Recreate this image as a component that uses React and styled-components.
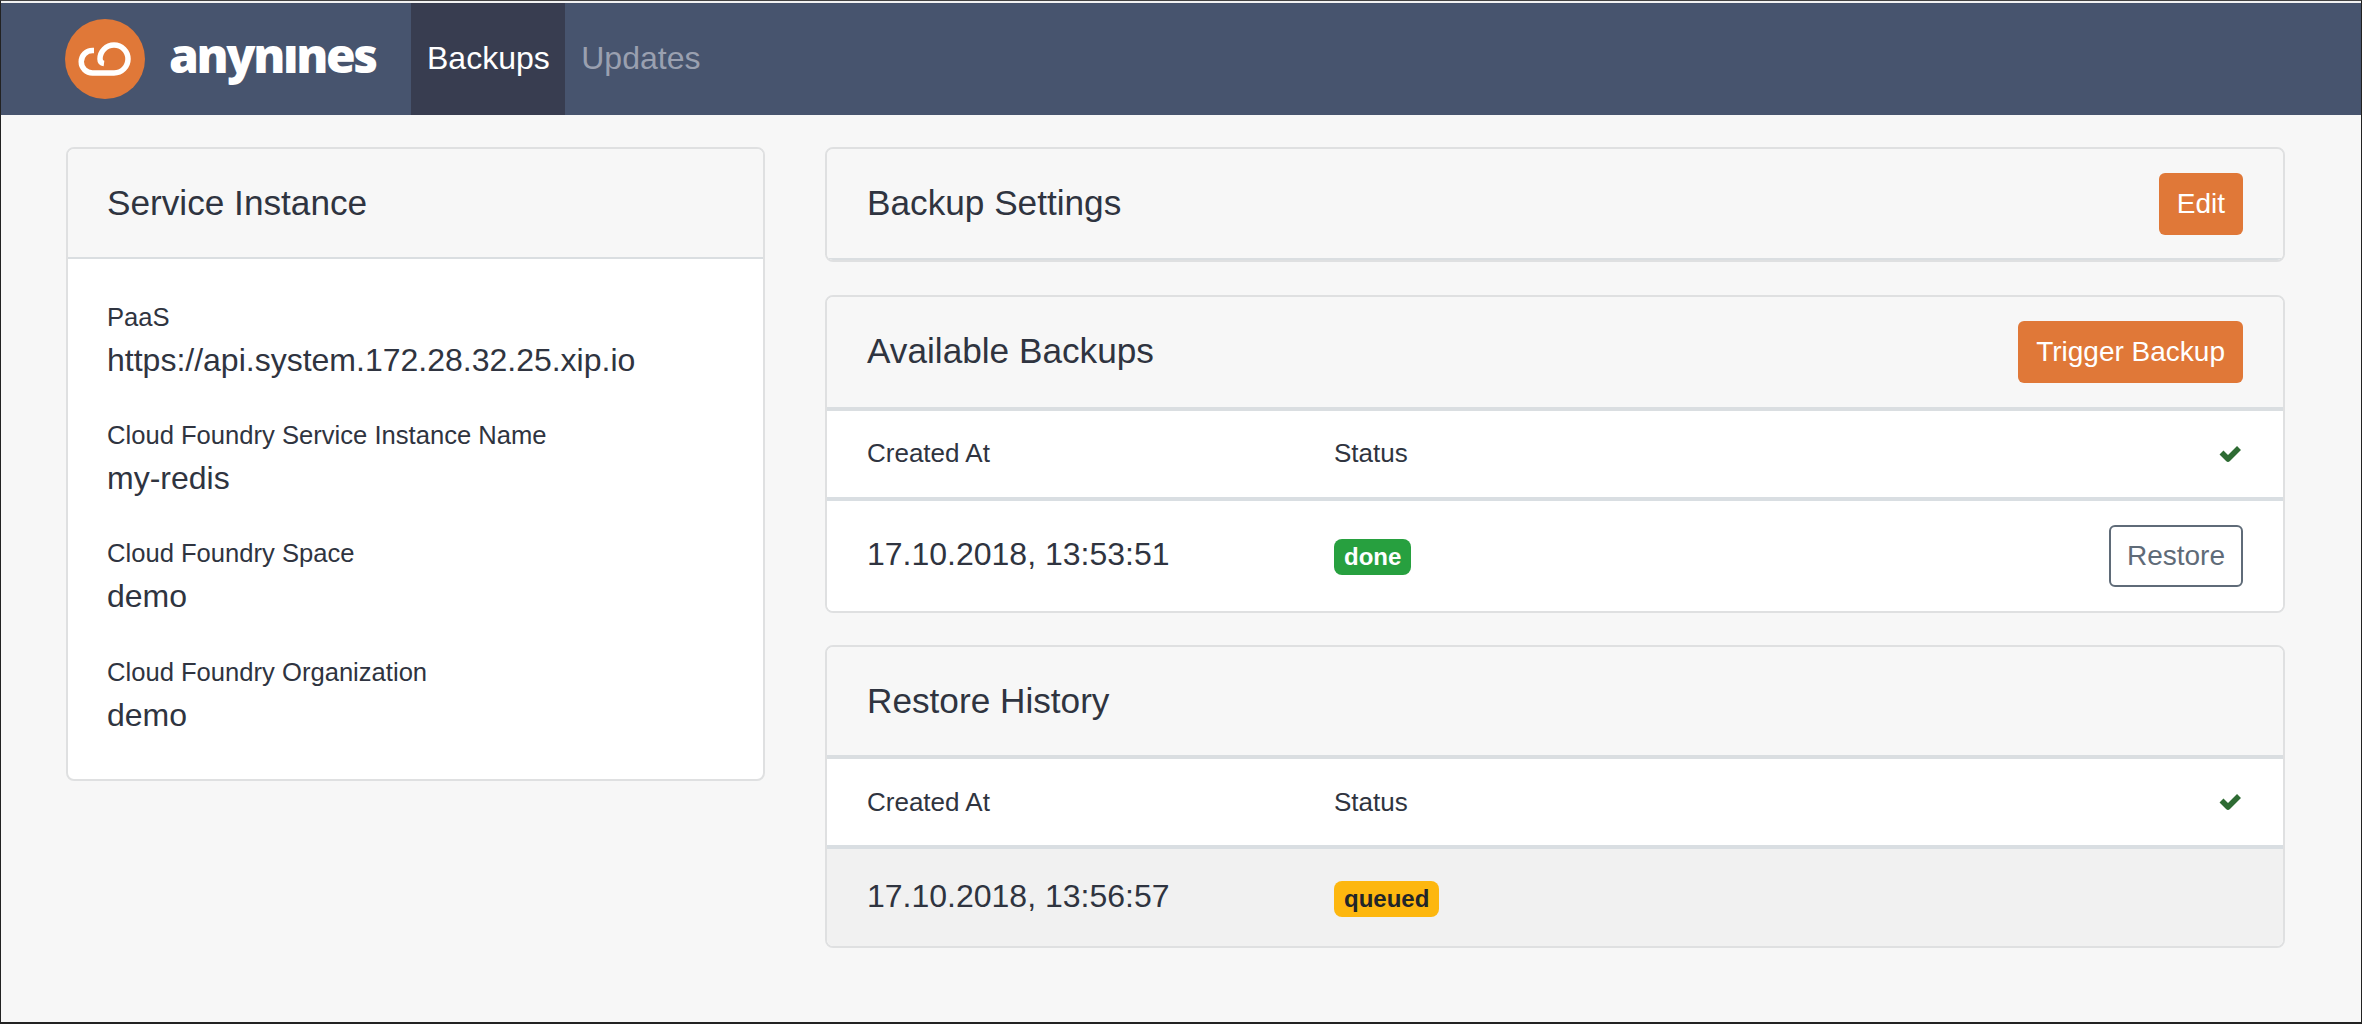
import React from 'react';
import styled, { createGlobalStyle } from 'styled-components';

const Global = createGlobalStyle`
  html, body { margin: 0; padding: 0; height: 1024px; overflow: hidden; background: #f7f7f7; }
  * { box-sizing: border-box; }
`;

const Page = styled.div`
  height: 1024px;
  background: #f7f7f7;
  border-top: 1px solid #444;
  border-left: 1px solid #222;
  border-right: 1px solid #222;
  border-bottom: 2px solid #222;
  font-family: "Liberation Sans", Arial, sans-serif;
  color: #2f3440;
`;
const TopBar = styled.header`
  height: 114px;
  border-top: 2px solid #f2f2f2;
  background: #47546e;
  display: flex;
  align-items: stretch;
  padding-left: 64px;
`;
const Brand = styled.div`
  display: flex;
  align-items: center;
  gap: 24px;
  width: 346px;
  margin-top: -1px;
`;
const LogoText = styled.span`
  font-family: "Open Sans", sans-serif;
  font-weight: 800;
  font-size: 48px;
  letter-spacing: -2.4px;
  color: #fff;
  line-height: 1;
  margin-top: -8px;
`;
const Dotless = styled.span`
  display: inline-block;
  clip-path: inset(30% 0 0 0);
`;
const Tab = styled.a`
  display: flex;
  align-items: center;
  padding: 0 15.5px 2px 16px;
  font-size: 32px;
  color: ${p => (p.$active ? '#fff' : '#9aa0b0')};
  background: ${p => (p.$active ? '#383d50' : 'transparent')};
`;
const Main = styled.main`
  display: grid;
  grid-template-columns: 699px 1460px;
  column-gap: 60px;
  padding: 32px 0 0 65px;
  align-items: start;
`;
const Column = styled.div`
  display: flex;
  flex-direction: column;
  gap: 32.5px;
`;
const Card = styled.section`
  border: 2px solid #dfe0e1;
  border-radius: 8px;
  background: #fff;
  overflow: hidden;
`;
const CardHeader = styled.div`
  height: ${p => p.$h}px;
  background: #f7f7f7;
  display: flex;
  align-items: center;
  justify-content: space-between;
  padding: 0 40px 0 ${p => p.$left || 40}px;
  border-bottom: ${p => (p.$thick ? 4 : 2)}px solid #dadee1;
`;
const CardTitle = styled.h2`
  margin: 0;
  font-size: 35.2px;
  font-weight: 400;
  line-height: 1.2;
  color: #2f3440;
`;
const FieldList = styled.div`
  padding: 39px 40px 8px 39px;
  display: flex;
  flex-direction: column;
`;
const Field = styled.div`
  height: 118.2px;
`;
const FieldLabel = styled.div`
  font-size: 25.6px;
  line-height: 38px;
`;
const FieldValue = styled.div`
  font-size: 32px;
  line-height: 48px;
`;
const PrimaryButton = styled.button`
  height: 62px;
  padding: 0 18px;
  border: 0;
  border-radius: 6px;
  background: #e07838;
  color: #fff;
  font: 400 28px "Liberation Sans", Arial, sans-serif;
`;
const OutlineButton = styled.button`
  height: 62px;
  width: 134px;
  border: 2px solid #5f6b78;
  border-radius: 6px;
  background: #fff;
  color: #5f6b78;
  font: 400 28px "Liberation Sans", Arial, sans-serif;
`;
const Row = styled.div`
  display: grid;
  grid-template-columns: 467px 1fr auto;
  align-items: center;
  padding: 0 40px;
  height: ${p => p.$h}px;
  background: ${p => p.$bg || '#fff'};
  border-bottom: ${p => (p.$line ? '4px solid #d9dee2' : '0')};
`;
const HeadCell = styled.div`
  font-size: 26px;
`;
const DateCell = styled.div`
  font-size: 32px;
  margin-top: -3px;
`;
const Badge = styled.span`
  display: inline-block;
  height: 36px;
  line-height: 36px;
  padding: 0 10px;
  border-radius: 8px;
  font-size: 24px;
  font-weight: 700;
  background: ${p => p.$bg};
  color: ${p => p.$fg};
`;
const BadgeCell = styled.div`
  display: flex;
  margin-top: 2px;
`;

const Check = () => (
  <svg width="24" height="18" viewBox="0 0 24 18">
    <path d="M2.5 7.5 L9 14 L20 3" fill="none" stroke="#2e6b33" strokeWidth="5.6" strokeLinejoin="round" />
  </svg>
);

const CloudLogo = () => (
  <svg width="80" height="80" viewBox="0 0 80 80">
    <circle cx="40" cy="40" r="40" fill="#e07838" />
    <path
      d="M29 31.5H27.5A11.25 11.25 0 0 0 27.5 54H49A14 14 0 1 0 35 40Q35 44 39 44.5"
      fill="none"
      stroke="#fff"
      strokeWidth="5.5"
    />
  </svg>
);

const HeaderRow = () => (
  <Row $h={90} $line>
    <HeadCell>Created At</HeadCell>
    <HeadCell>Status</HeadCell>
    <Check />
  </Row>
);

export default function App() {
  return (
    <Page>
      <Global />
      <TopBar>
        <Brand>
          <CloudLogo />
          <LogoText>anyn<Dotless>i</Dotless>nes</LogoText>
        </Brand>
        <Tab $active>Backups</Tab>
        <Tab>Updates</Tab>
      </TopBar>
      <Main>
        <Column>
          <Card>
            <CardHeader $h={110} $left={39}>
              <CardTitle>Service Instance</CardTitle>
            </CardHeader>
            <FieldList>
              <Field>
                <FieldLabel>PaaS</FieldLabel>
                <FieldValue>https://api.system.172.28.32.25.xip.io</FieldValue>
              </Field>
              <Field>
                <FieldLabel>Cloud Foundry Service Instance Name</FieldLabel>
                <FieldValue>my-redis</FieldValue>
              </Field>
              <Field>
                <FieldLabel>Cloud Foundry Space</FieldLabel>
                <FieldValue>demo</FieldValue>
              </Field>
              <Field>
                <FieldLabel>Cloud Foundry Organization</FieldLabel>
                <FieldValue>demo</FieldValue>
              </Field>
            </FieldList>
          </Card>
        </Column>
        <Column>
          <Card>
            <CardHeader $h={111}>
              <CardTitle>Backup Settings</CardTitle>
              <PrimaryButton>Edit</PrimaryButton>
            </CardHeader>
          </Card>
          <Card>
            <CardHeader $h={114} $thick>
              <CardTitle>Available Backups</CardTitle>
              <PrimaryButton>Trigger Backup</PrimaryButton>
            </CardHeader>
            <HeaderRow />
            <Row $h={110}>
              <DateCell>17.10.2018, 13:53:51</DateCell>
              <BadgeCell><Badge $bg="#27a03f" $fg="#fff">done</Badge></BadgeCell>
              <OutlineButton>Restore</OutlineButton>
            </Row>
          </Card>
          <Card>
            <CardHeader $h={112} $thick>
              <CardTitle>Restore History</CardTitle>
            </CardHeader>
            <HeaderRow />
            <Row $h={97} $bg="#f1f1f1">
              <DateCell>17.10.2018, 13:56:57</DateCell>
              <BadgeCell><Badge $bg="#fdb70f" $fg="#212529">queued</Badge></BadgeCell>
            </Row>
          </Card>
        </Column>
      </Main>
    </Page>
  );
}
